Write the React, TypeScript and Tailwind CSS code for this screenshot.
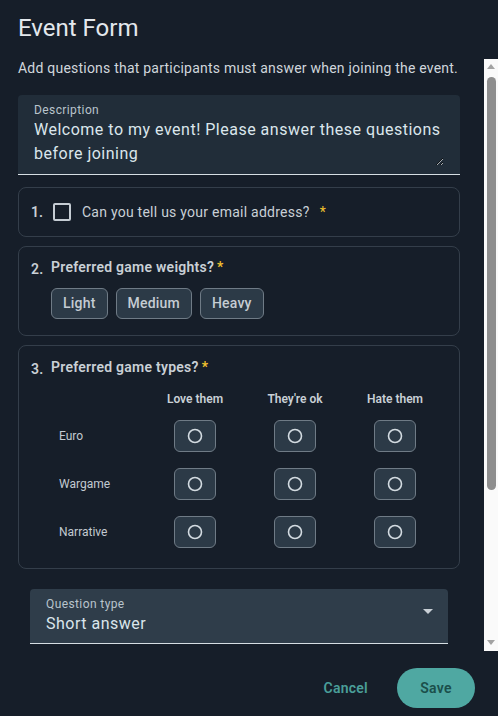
import { useState } from "react";

const font = { fontFamily: "Roboto, 'Noto Sans', sans-serif" };

function Star() {
  return <span className="text-[#f2c12e] ml-[3px]">*</span>;
}

function Ring() {
  return (
    <svg width="16" height="16" viewBox="0 0 16 16" fill="none">
      <circle cx="8" cy="8" r="6.5" stroke="#d3dbe1" strokeWidth="1.6" />
    </svg>
  );
}

function Chip({ label }: { label: string }) {
  return (
    <button className="h-[31px] px-[11px] rounded-[6px] bg-[#2c3a47] border border-[#6f7b86] text-[14px] font-medium tracking-[0.2px] text-[#c5ccd3]">
      {label}
    </button>
  );
}

// classic light scrollbar drawn beside the scrolling column
function FakeScrollbar() {
  return (
    <div className="w-[14px] shrink-0 bg-[#fafafa] flex flex-col items-center">
      <svg width="8" height="5" viewBox="0 0 8 5" className="mt-[5px]">
        <path d="M0 5L4 0L8 5z" fill="#a3a3a3" />
      </svg>
      <div className="mt-[8px] ml-[1px] w-[9px] h-[413px] rounded-full bg-[#8e8e8e]" />
      <div className="flex-1" />
      <svg width="8" height="5" viewBox="0 0 8 5" className="mb-[6px]">
        <path d="M0 0L8 0L4 5z" fill="#a3a3a3" />
      </svg>
    </div>
  );
}

const rows = ["Euro", "Wargame", "Narrative"];
const cols = ["Love them", "They're ok", "Hate them"];

export default function App() {
  const [desc, setDesc] = useState("Welcome to my event! Please answer these questions before joining");

  return (
    <div className="w-full h-[716px] bg-[#161e29] flex flex-col overflow-hidden" style={font}>
      <h2 className="px-[18px] pt-[12px] text-[24px] leading-[32px] text-[#e3e8ed] font-normal">Event Form</h2>

      <div className="mt-[15px] h-[592px] shrink-0 flex">
        <div className="flex-1 overflow-y-auto overflow-x-hidden [scrollbar-width:none] pl-[18px] pr-[24px]">
          <p className="text-[14px] leading-[18px] tracking-[0.22px] whitespace-nowrap text-[#d0d6dc]">
            Add questions that participants must answer when joining the event.
          </p>

          {/* Description field */}
          <div className="mt-[18px] bg-[#212d39] rounded-t-[4px] border-b border-[#d6dee3] px-[16px] pt-[7px] pb-[8px]">
            <div className="text-[12px] leading-[16px] tracking-[0.4px] text-[#b9c4cc]">Description</div>
            <textarea
              value={desc}
              onChange={(e) => setDesc(e.target.value)}
              rows={2}
              className="block w-full bg-transparent text-[16px] leading-[24px] tracking-[0.5px] text-[#dbe6ec] outline-none resize-y"
            />
          </div>

          {/* Question 1 */}
          <div className="mt-[12px] border border-[#343e4a] rounded-[8px] h-[50px] px-[12px] flex items-center">
            <span className="text-[14px] font-semibold text-[#c9d0d6]">1.</span>
            <span className="ml-[10px] w-[18px] h-[18px] border-2 border-[#c5ccd3] rounded-[2px]" />
            <span className="ml-[11px] text-[14px] tracking-[0.25px] text-[#c9d0d6]">Can you tell us your email address?</span>
            <span className="ml-[7px] text-[14px]"><Star /></span>
          </div>

          {/* Question 2 */}
          <div className="mt-[9px] border border-[#343e4a] rounded-[8px] px-[12px] pt-[10px] pb-[16px]">
            <div className="flex items-baseline text-[14px] tracking-[0.25px] text-[#c9d0d6] font-semibold">
              <span className="w-[20px] translate-y-[2px]">2.</span>
              <span>Preferred game weights?</span>
              <Star />
            </div>
            <div className="mt-[10px] ml-[20px] flex gap-[8px]">
              <Chip label="Light" />
              <Chip label="Medium" />
              <Chip label="Heavy" />
            </div>
          </div>

          {/* Question 3 */}
          <div className="mt-[9px] border border-[#343e4a] rounded-[8px] px-[12px] pt-[11px] pb-[12px]">
            <div className="flex items-baseline text-[14px] tracking-[0.25px] text-[#c9d0d6] font-semibold">
              <span className="w-[20px] translate-y-[2px]">3.</span>
              <span>Preferred game types?</span>
              <Star />
            </div>
            <div className="mt-[13px] ml-[28px] grid grid-cols-[86px_100px_100px_100px] items-center">
              <div />
              {cols.map((c) => (
                <div key={c} className="text-center text-[12px] font-semibold text-[#c9d0d6] h-[16px] leading-[16px] mb-[5px]">
                  {c}
                </div>
              ))}
              {rows.map((r) => (
                <div key={r} className="contents">
                  <div className="text-[12px] text-[#c3cad1] h-[48px] flex items-center">{r}</div>
                  {cols.map((c) => (
                    <div key={c} className="flex justify-center items-center h-[48px]">
                      <button className="w-[42px] h-[32px] rounded-[6px] bg-[#2c3a47] border border-[#6f7b86] flex items-center justify-center">
                        <Ring />
                      </button>
                    </div>
                  ))}
                </div>
              ))}
            </div>
          </div>

          {/* Question type select */}
          <div className="mt-[20px] mb-[16px] mx-[12px] bg-[#2f3d4a] rounded-t-[4px] border-b border-[#d6dee3] pl-[16px] pr-[14px] pt-[7px] pb-[7px] flex items-center">
            <div className="flex-1">
              <div className="text-[12px] leading-[16px] tracking-[0.4px] text-[#b9c4cc]">Question type</div>
              <div className="text-[16px] leading-[24px] tracking-[0.5px] text-[#dbe6ec]">Short answer</div>
            </div>
            <svg width="12" height="6" viewBox="0 0 12 6" className="mb-[8px]">
              <path d="M1 0h10L6 5z" fill="#c9d0d6" />
            </svg>
          </div>
        </div>
        <FakeScrollbar />
      </div>

      <div className="flex-1 flex items-start justify-end gap-[29px] pt-[17px] pr-[23px]">
        <button className="h-[40px] text-[14px] font-semibold tracking-[0.25px] text-[#4a9e99]">Cancel</button>
        <button className="w-[78px] h-[40px] rounded-full bg-[#4fa8a2] text-[14px] font-semibold tracking-[0.25px] text-[#1b4f4b]">
          Save
        </button>
      </div>
    </div>
  );
}
